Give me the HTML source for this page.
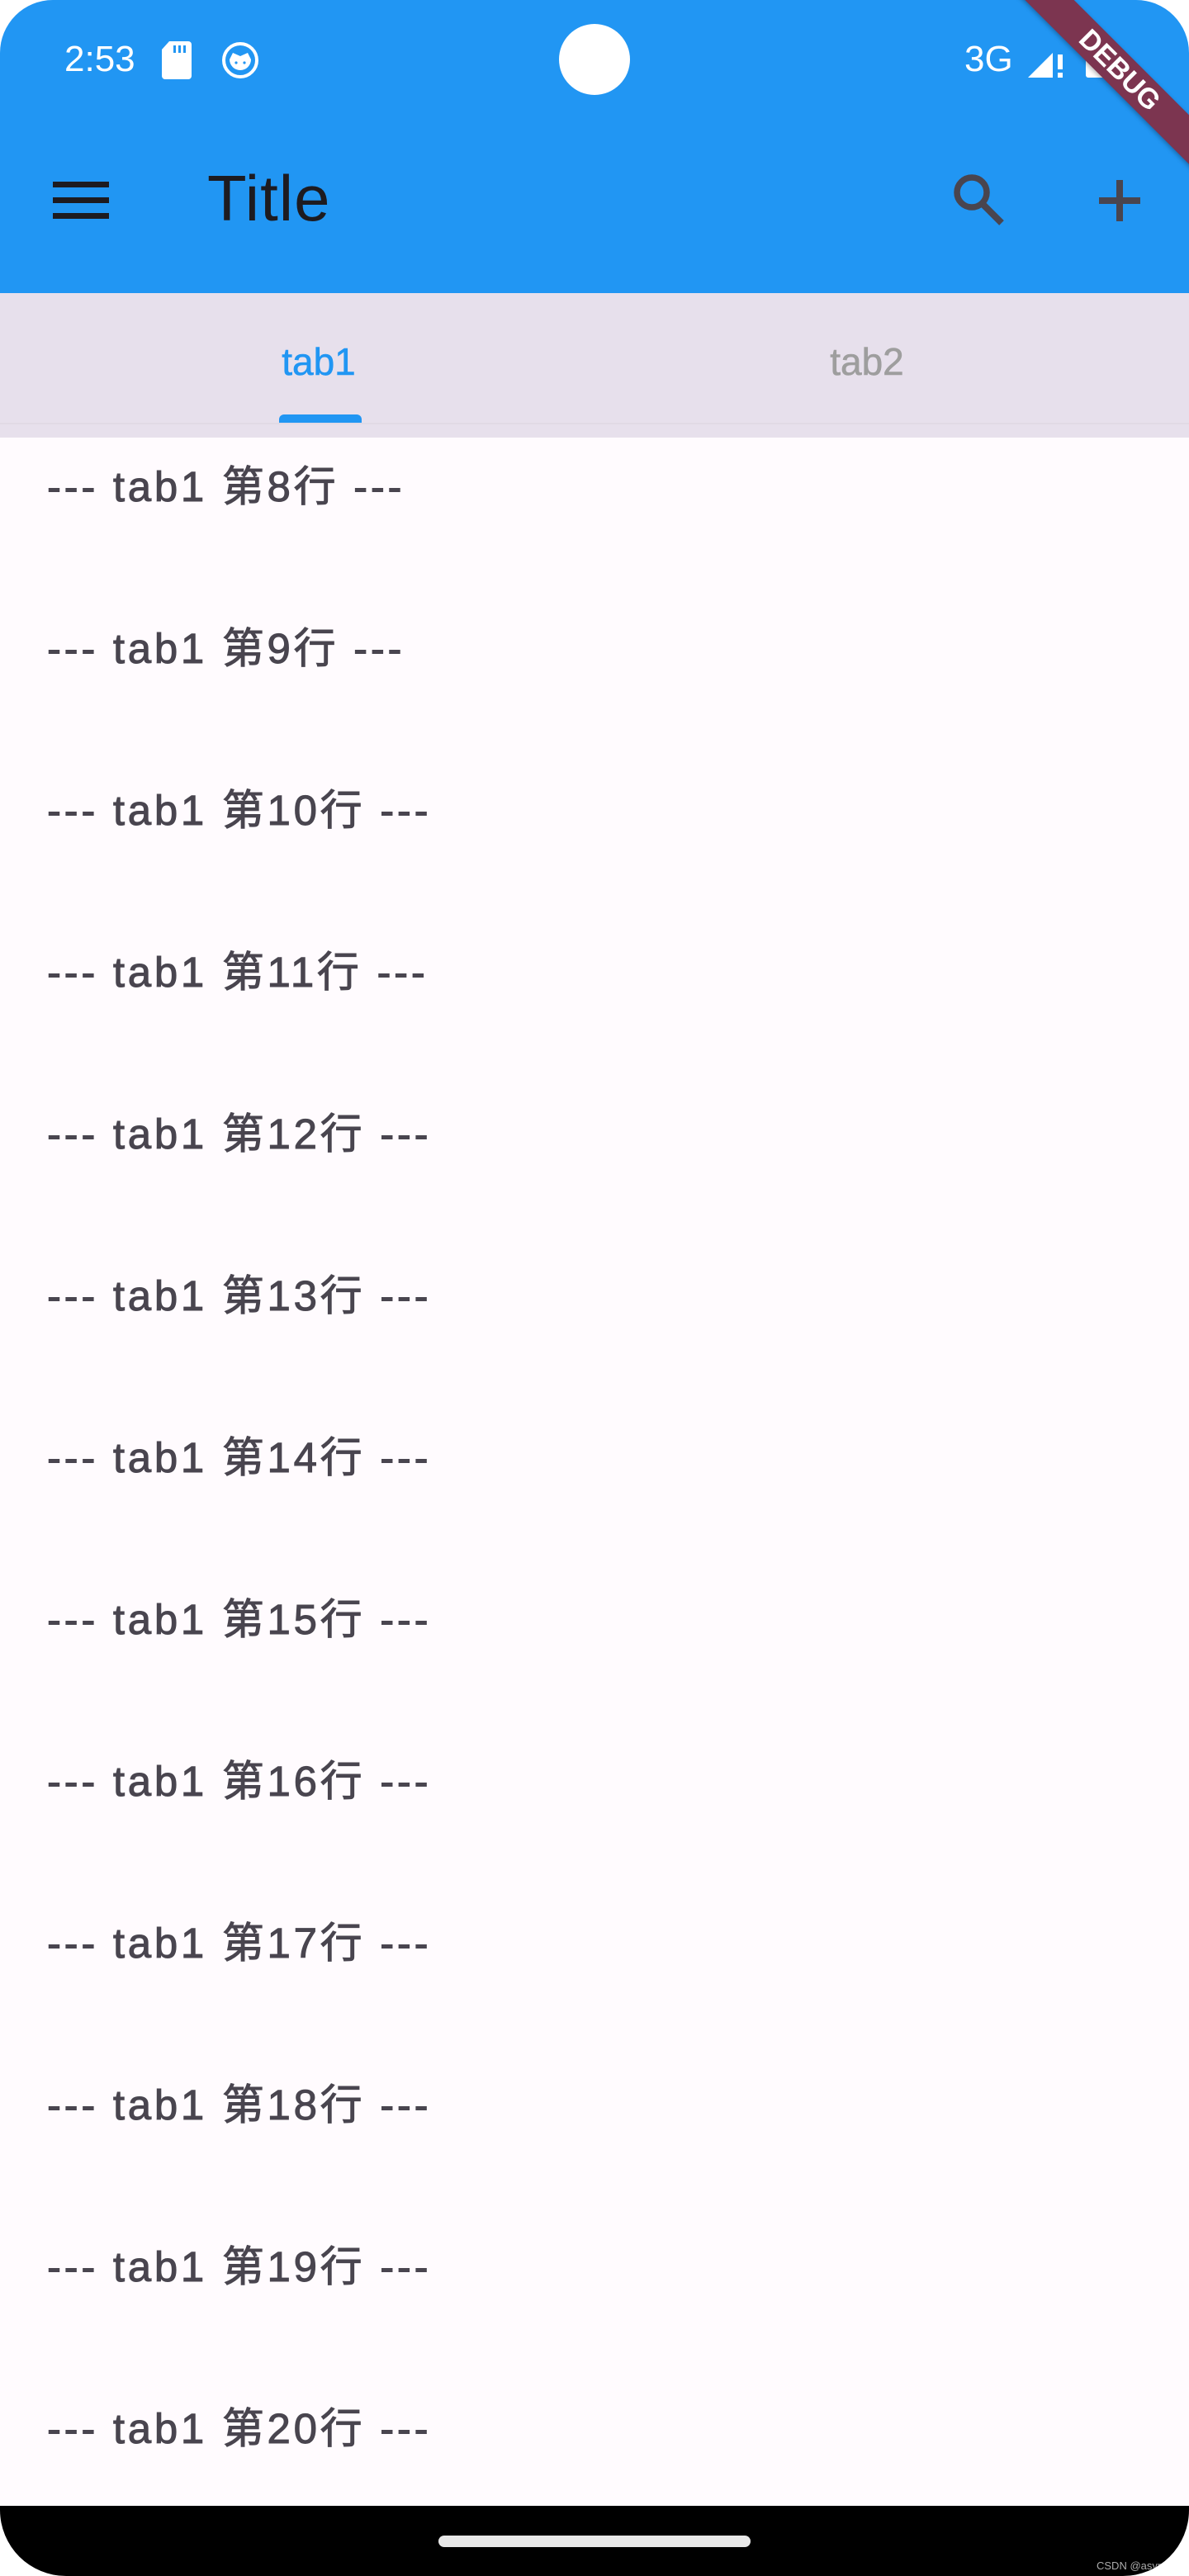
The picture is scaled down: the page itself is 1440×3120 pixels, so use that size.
<!DOCTYPE html>
<html><head><meta charset="utf-8"><style>
*{margin:0;padding:0;box-sizing:border-box}
html,body{width:1440px;height:3120px;background:#fff;overflow:hidden}
#scr{position:absolute;left:0;top:0;width:1440px;height:3120px;border-radius:64px 64px 80px 80px;overflow:hidden;background:#fffbfe}
.blue{position:absolute;left:0;top:0;width:1440px;height:355px;background:#2196f3}
.tabs{position:absolute;left:0;top:355px;width:1440px;height:175px;background:#e7e0ec}
.t{position:absolute;font-family:"Liberation Sans","Noto Sans CJK SC",sans-serif}
.row{position:absolute;left:57px;font-family:"Liberation Sans","Noto Sans CJK SC",sans-serif;font-size:51px;letter-spacing:3.7px;-webkit-text-stroke:1px #49454f;color:#49454f;line-height:60px;white-space:nowrap}
.nav{position:absolute;left:0;top:3035px;width:1440px;height:85px;background:#000}
</style></head><body>
<div id="scr">
<div class="blue"></div>
<div class="t" style="left:78px;top:46px;font-size:44px;color:#fff;line-height:52px">2:53</div>
<svg style="position:absolute;left:196px;top:50px" width="36" height="46" viewBox="0 0 36 46"><path d="M9 0H32a4 4 0 0 1 4 4V42a4 4 0 0 1-4 4H4a4 4 0 0 1-4-4V10z" fill="#fff"/><rect x="14" y="5" width="3" height="9" fill="#2196f3"/><rect x="20" y="5" width="3" height="9" fill="#2196f3"/><rect x="26" y="5" width="3" height="9" fill="#2196f3"/></svg>
<svg style="position:absolute;left:268px;top:50px" width="46" height="46" viewBox="0 0 46 46"><circle cx="23" cy="23" r="20" fill="none" stroke="#fff" stroke-width="4"/><path d="M10 22a13 13 0 0 0 26 0l-4-8-9 4-9-4z" fill="#fff"/><circle cx="18" cy="26" r="1.6" fill="#2196f3"/><circle cx="28" cy="26" r="1.6" fill="#2196f3"/></svg>
<div style="position:absolute;left:677px;top:29px;width:86px;height:86px;border-radius:50%;background:#fff"></div>
<div class="t" style="left:1168px;top:46px;font-size:44px;color:#fff;line-height:52px">3G</div>
<svg style="position:absolute;left:1245px;top:50px" width="46" height="46" viewBox="0 0 46 46"><path d="M0 44L30 14V44z" fill="#fff"/><rect x="36" y="16" width="6" height="18" fill="#fff"/><rect x="36" y="38" width="6" height="6" fill="#fff"/></svg>
<div style="position:absolute;left:1315px;top:54px;width:27px;height:40px;background:#fff;border-radius:3px"></div>
<svg style="position:absolute;left:64px;top:218px" width="68" height="50" viewBox="0 0 68 50"><rect x="0" y="2" width="68" height="7" fill="#1d1b20"/><rect x="0" y="21" width="68" height="7" fill="#1d1b20"/><rect x="0" y="40" width="68" height="7" fill="#1d1b20"/></svg>
<div class="t" style="left:251px;top:195px;font-size:78px;letter-spacing:1px;color:#1d1b20;line-height:90px">Title</div>
<svg style="position:absolute;left:1150px;top:205px" width="80" height="80" viewBox="0 0 80 80"><circle cx="27" cy="28" r="18" fill="none" stroke="#49454f" stroke-width="7.5"/><path d="M40 42L63 65" stroke="#49454f" stroke-width="8"/></svg>
<svg style="position:absolute;left:1326px;top:213px" width="60" height="60" viewBox="0 0 60 60"><path d="M30 5V55M5 30H55" stroke="#49454f" stroke-width="8"/></svg>
<div style="position:absolute;left:1156px;top:64px;width:400px;height:42px;background:#7c3550;transform:rotate(45deg);box-shadow:0 2px 6px rgba(0,0,0,.3);color:#fff;font-family:'Liberation Sans',sans-serif;font-weight:bold;font-size:34px;line-height:42px;text-align:center">DEBUG</div>
<div class="tabs"></div>
<div class="t" style="left:336px;top:410px;font-size:46px;color:#2196f3;line-height:56px;width:100px;text-align:center;-webkit-text-stroke:0.6px #2196f3">tab1</div>
<div class="t" style="left:1000px;top:410px;font-size:46px;color:#9e9e9e;line-height:56px;width:100px;text-align:center;-webkit-text-stroke:0.6px #9e9e9e">tab2</div>
<div style="position:absolute;left:338px;top:502px;width:100px;height:10px;background:#2196f3;border-radius:6px 6px 0 0"></div>
<div style="position:absolute;left:0;top:512px;width:1440px;height:2px;background:#e1dae5"></div>
<div class="row" style="top:560px">--- tab1 第8行 ---</div>
<div class="row" style="top:756px">--- tab1 第9行 ---</div>
<div class="row" style="top:952px">--- tab1 第10行 ---</div>
<div class="row" style="top:1148px">--- tab1 第11行 ---</div>
<div class="row" style="top:1344px">--- tab1 第12行 ---</div>
<div class="row" style="top:1540px">--- tab1 第13行 ---</div>
<div class="row" style="top:1736px">--- tab1 第14行 ---</div>
<div class="row" style="top:1932px">--- tab1 第15行 ---</div>
<div class="row" style="top:2128px">--- tab1 第16行 ---</div>
<div class="row" style="top:2324px">--- tab1 第17行 ---</div>
<div class="row" style="top:2520px">--- tab1 第18行 ---</div>
<div class="row" style="top:2716px">--- tab1 第19行 ---</div>
<div class="row" style="top:2912px">--- tab1 第20行 ---</div>
<div class="nav"></div>
<div style="position:absolute;left:531px;top:3071px;width:378px;height:14px;border-radius:7px;background:#e8e8e8"></div>
<div class="t" style="left:1328px;top:3100px;font-size:13px;color:#aaa;white-space:nowrap">CSDN @async9</div>
</div>
</body></html>
